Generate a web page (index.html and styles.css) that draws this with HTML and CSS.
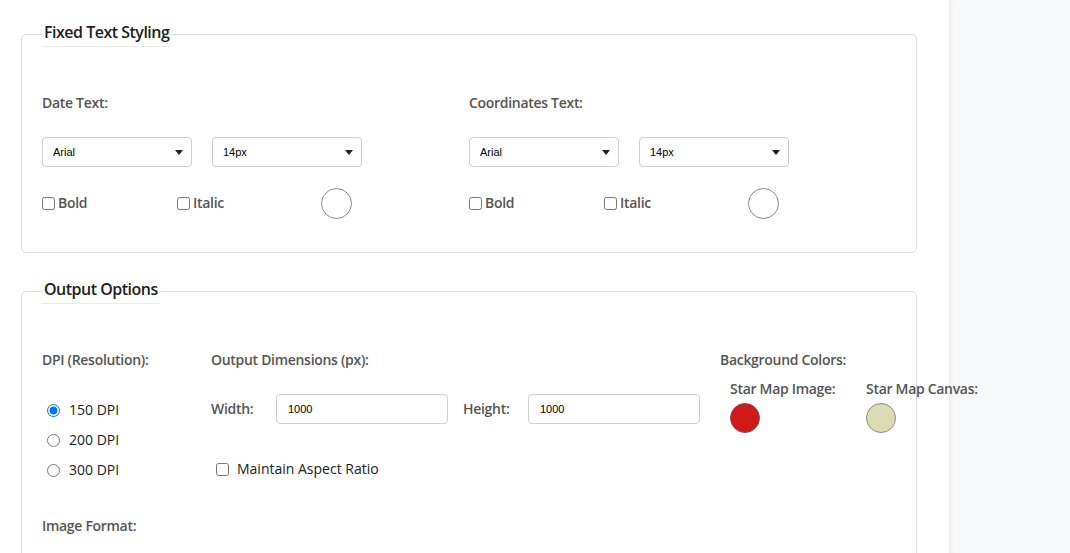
FILE: index.html
```html
<!DOCTYPE html>
<html>
<head>
<meta charset="utf-8">
<link rel="stylesheet" href="styles.css">
</head>
<body>
<div class="page">
  <main class="main">
    <fieldset class="panel panel-text">
      <legend>Fixed Text Styling</legend>
      <div class="two-col">
        <div class="text-group">
          <div class="label">Date Text:</div>
          <div class="select-row">
            <select class="sel"><option>Arial</option></select>
            <select class="sel"><option>14px</option></select>
          </div>
          <div class="style-row">
            <label class="check label"><input type="checkbox"> Bold</label>
            <label class="check label"><input type="checkbox"> Italic</label>
            <span class="swatch swatch-white"></span>
          </div>
        </div>
        <div class="text-group">
          <div class="label">Coordinates Text:</div>
          <div class="select-row">
            <select class="sel"><option>Arial</option></select>
            <select class="sel"><option>14px</option></select>
          </div>
          <div class="style-row">
            <label class="check label"><input type="checkbox"> Bold</label>
            <label class="check label"><input type="checkbox"> Italic</label>
            <span class="swatch swatch-white"></span>
          </div>
        </div>
      </div>
    </fieldset>

    <fieldset class="panel panel-output">
      <legend>Output Options</legend>
      <div class="out-grid">
        <div class="dpi">
          <div class="label">DPI (Resolution):</div>
          <div class="radios">
            <label class="radio"><input type="radio" name="dpi" checked> 150 DPI</label>
            <label class="radio"><input type="radio" name="dpi"> 200 DPI</label>
            <label class="radio"><input type="radio" name="dpi"> 300 DPI</label>
          </div>
        </div>
        <div class="dims">
          <div class="label">Output Dimensions (px):</div>
          <div class="dim-row">
            <span class="label dim-label">Width:</span>
            <input class="num" type="text" value="1000">
            <span class="label dim-label dim-label-h">Height:</span>
            <input class="num" type="text" value="1000">
          </div>
          <label class="aspect"><input type="checkbox"> Maintain Aspect Ratio</label>
        </div>
        <div class="bg">
          <div class="label">Background Colors:</div>
          <div class="bg-row">
            <div class="bg-item">
              <div class="label">Star Map Image:</div>
              <span class="swatch swatch-red"></span>
            </div>
            <div class="bg-item">
              <div class="label">Star Map Canvas:</div>
              <span class="swatch swatch-beige"></span>
            </div>
          </div>
        </div>
      </div>
      <div class="label format-label">Image Format:</div>
    </fieldset>
  </main>
  <aside class="side"></aside>
</div>
</body>
</html>
```

FILE: styles.css
```css
* { box-sizing: border-box; }
html, body { margin: 0; padding: 0; height: 100%; overflow: hidden; }
body {
  font-family: "Open Sans", "Noto Sans", sans-serif;
  font-size: 14px;
  line-height: 20px;
  color: #222;
  background: #f7f8fa;
}
.page { display: flex; height: 553px; }
.main {
  width: 949px;
  flex: none;
  padding: 21px 0 0 21px;
  background: #fff;
  position: relative;
  z-index: 1;
}
.side {
  flex: 1;
  background: #f7f8fa;
  box-shadow: inset 5px 0 6px -5px rgba(0,0,0,0.08);
}
.panel {
  width: 896px;
  min-width: 0;
  margin: 0 0 25px 0;
  padding: 0 20px 33px;
  border: 1px solid #dcdcdc;
  border-radius: 5px;
}
.panel legend {
  font-size: 16px;
  font-weight: 600;
  letter-spacing: -0.5px;
  line-height: 20px;
  color: #1e1e1e;
  padding: 1px 2px 4px;
  border-bottom: 1px solid #ececec;
}
.label {
  font-weight: 600;
  letter-spacing: -0.3px;
  color: #555;
}
.two-col {
  display: grid;
  grid-template-columns: 427px 427px;
  margin-top: 46px;
}
.select-row {
  display: flex;
  gap: 20px;
  margin-top: 24px;
}
.sel {
  -webkit-appearance: none;
  appearance: none;
  width: 150px;
  height: 30px;
  border: 1px solid #cfcfcf;
  border-radius: 4px;
  background: #fff url("data:image/svg+xml;utf8,<svg xmlns='http://www.w3.org/2000/svg' width='8' height='5'><path d='M0 0h8L4 5z' fill='%23222'/></svg>") no-repeat right 8px center;
  font-family: "Liberation Sans", Arial, sans-serif;
  font-size: 11px;
  color: #000;
  padding: 0 10px;
  margin: 0;
}
.style-row {
  display: grid;
  grid-template-columns: 135px 144px 32px;
  align-items: center;
  margin-top: 20px;
  height: 32px;
}
.check {
  display: flex;
  align-items: center;
  gap: 3px;
}
.check input, .aspect input, .radio input {
  margin: 0;
  width: 13px;
  height: 13px;
}
.swatch {
  display: block;
  width: 31px;
  height: 31px;
  border-radius: 50%;
  border: 1px solid #8a8a8a;
}
.swatch-white { background: #fff; }
.swatch-red { background: #d01a1a; width: 30px; height: 30px; border-color: #8a4a4a; }
.swatch-beige { background: #dcdcb2; width: 30px; height: 30px; }

.out-grid {
  display: grid;
  grid-template-columns: 169px 509px minmax(0, 1fr);
  margin-top: 46px;
}
.radios { margin-top: 25px; }
.radio {
  display: flex;
  align-items: center;
  gap: 9px;
  height: 30px;
  padding-left: 5px;
  color: #222;
}
.dim-row {
  display: flex;
  align-items: center;
  margin-top: 24px;
  height: 30px;
}
.dim-label { width: 65px; }
.dim-label-h { margin-left: 15px; }
.num {
  width: 172px;
  height: 30px;
  border: 1px solid #cfcfcf;
  border-radius: 4px;
  padding: 0 11px;
  font-family: "Liberation Sans", Arial, sans-serif;
  font-size: 11px;
  color: #000;
  margin: 0;
}
.aspect {
  display: flex;
  align-items: center;
  gap: 8px;
  height: 30px;
  margin-top: 30px;
  padding-left: 5px;
  color: #222;
}
.bg { min-width: 0; }
.bg-row {
  display: flex;
  padding-left: 10px;
  margin-top: 9px;
}
.bg-item { width: 136px; flex: none; white-space: nowrap; }
.bg-item .swatch { margin-top: 4px; }
.format-label { margin-top: 31px; }
```
